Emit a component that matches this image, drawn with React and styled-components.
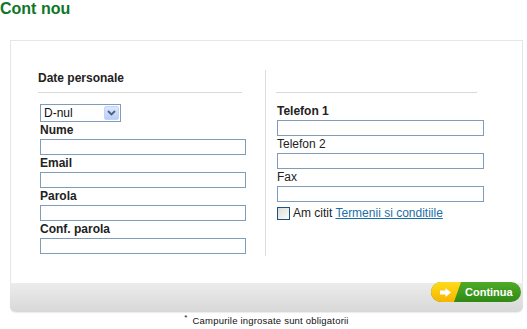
import React from 'react';
import styled, { createGlobalStyle } from 'styled-components';

const GlobalStyle = createGlobalStyle`
  body {
    margin: 0;
    background: #fff;
    font-family: 'Liberation Sans', Arial, sans-serif;
    color: #222;
  }
`;

const Page = styled.div`
  width: 527px;
`;

const Title = styled.h1`
  margin: 0;
  font-size: 16px;
  line-height: 18px;
  font-weight: 700;
  color: #0f7628;
`;

const Card = styled.div`
  margin: 22px 0 0 10px;
  width: 513px;
  box-sizing: border-box;
  border: 1px solid #e6e6e6;
  border-bottom: none;
  border-radius: 0 0 6px 6px;
  background: #fff;
`;

const Body = styled.div`
  display: flex;
  align-items: flex-start;
  height: 242px;
  box-sizing: border-box;
  padding: 29px 0 0 27px;
`;

const Column = styled.div`
  width: ${({ $width }) => $width}px;
  margin-left: ${({ $offset }) => $offset || 0}px;
`;

const Heading = styled.div`
  width: ${({ $width }) => $width}px;
  height: 14px;
  padding: 1px 0 7px;
  border-bottom: 1px solid #d9d9d9;
  font-size: 12px;
  line-height: 14px;
  font-weight: 700;
  color: #222;
`;

const Fields = styled.div`
  display: flex;
  flex-direction: column;
  align-items: flex-start;
  margin-top: ${({ $top }) => $top}px;
  padding-left: ${({ $inset }) => $inset}px;
`;

const Label = styled.label`
  display: block;
  font-size: 12px;
  line-height: 14px;
  padding: 1px 0 2px;
  font-weight: ${({ $required }) => ($required ? 700 : 400)};
  color: #222;
`;

const Input = styled.input`
  display: block;
  box-sizing: border-box;
  width: ${({ $width }) => $width}px;
  height: 16px;
  margin: 0;
  padding: 0 2px;
  border: 1px solid #7f9db9;
  background: #fff;
  font: 12px 'Liberation Sans', Arial, sans-serif;
  outline: none;
`;

const Select = styled.div`
  display: flex;
  align-items: center;
  justify-content: space-between;
  box-sizing: border-box;
  width: 81px;
  height: 18px;
  padding: 0 1px 0 3px;
  border: 1px solid #7f9db9;
  background: #fff;
  font-size: 12px;
  color: #111;
`;

const SelectButton = styled.span`
  display: flex;
  align-items: center;
  justify-content: center;
  width: 15px;
  height: 14px;
  border-radius: 2px;
  background: linear-gradient(#dce8fb, #b9cff5);
  border: 1px solid #c3d3fd;
  box-sizing: border-box;
`;

const Divider = styled.div`
  width: 1px;
  height: 186px;
  margin-left: 23px;
  background: #dcdcdc;
`;

const CheckRow = styled.div`
  display: flex;
  align-items: center;
  gap: 3px;
  margin-top: 4px;
  font-size: 12px;
  line-height: 14px;
  color: #222;
`;

const Checkbox = styled.span`
  display: block;
  width: 13px;
  height: 13px;
  box-sizing: border-box;
  border: 1px solid #1c5180;
  background: linear-gradient(135deg, #dcdcd7, #fbfbfa);
`;

const Link = styled.a`
  color: #1b6fa6;
  text-decoration: underline;
`;

const Footer = styled.div`
  display: flex;
  justify-content: flex-end;
  align-items: flex-start;
  height: 29px;
  margin: 0 -1px;
  padding-right: 2px;
  border-radius: 0 0 6px 6px;
  background: linear-gradient(#ececec, #d8d8d8);
  box-shadow: 0 1px 1px rgba(0, 0, 0, 0.08);
`;

const Button = styled.button`
  position: relative;
  display: flex;
  align-items: center;
  width: 90px;
  height: 20px;
  margin-top: -1px;
  padding: 0 0 0 34px;
  border: none;
  border-radius: 10px;
  overflow: hidden;
  background: linear-gradient(#4fab27, #2f8914);
  color: #fff;
  font: 700 11px 'Liberation Sans', Arial, sans-serif;
  cursor: pointer;
`;

const ButtonArrow = styled.span`
  position: absolute;
  left: 0;
  top: 0;
  bottom: 0;
  width: 30px;
  display: flex;
  align-items: center;
  padding-left: 9px;
  box-sizing: border-box;
  background: linear-gradient(#ffdc1a, #f7b400);
  clip-path: polygon(0 0, 100% 0, calc(100% - 7px) 100%, 0 100%);
`;

const Note = styled.div`
  width: 513px;
  margin-left: 10px;
  padding-top: 3px;
  text-align: center;
  font-size: 9.5px;
  line-height: 12px;
  color: #111;
  letter-spacing: 0.2px;

  sup {
    font-size: 8px;
    line-height: 0;
    margin-right: 2px;
  }
`;

const leftFields = ['Nume', 'Email', 'Parola', 'Conf. parola'];
const rightFields = [
  { label: 'Telefon 1', required: true },
  { label: 'Telefon 2' },
  { label: 'Fax' },
];

const App = () => (
  <Page>
    <GlobalStyle />
    <Title>Cont nou</Title>
    <Card>
      <Body>
        <Column $width={204}>
          <Heading $width={204}>Date personale</Heading>
          <Fields $top={11} $inset={2}>
            <Select>
              <span>D-nul</span>
              <SelectButton>
                <svg width="9" height="6" viewBox="0 0 9 6">
                  <path d="M1 1 L4.5 4.5 L8 1" fill="none" stroke="#4d6185" strokeWidth="1.8" />
                </svg>
              </SelectButton>
            </Select>
            {leftFields.map((f) => (
              <React.Fragment key={f}>
                <Label $required>{f}</Label>
                <Input $width={206} type={f.includes('arola') ? 'password' : 'text'} />
              </React.Fragment>
            ))}
          </Fields>
        </Column>
        <Divider />
        <Column $width={207} $offset={10}>
          <Heading $width={201} />
          <Fields $top={10} $inset={1}>
            {rightFields.map((f) => (
              <React.Fragment key={f.label}>
                <Label $required={f.required}>{f.label}</Label>
                <Input $width={207} />
              </React.Fragment>
            ))}
            <CheckRow>
              <Checkbox />
              <span>
                Am citit <Link href="#">Termenii si conditiile</Link>
              </span>
            </CheckRow>
          </Fields>
        </Column>
      </Body>
      <Footer>
        <Button>
          <ButtonArrow>
            <svg width="11" height="9" viewBox="0 0 11 9">
              <path d="M0 2.5 H5.5 V0 L11 4.5 L5.5 9 V6.5 H0 Z" fill="#fff" />
            </svg>
          </ButtonArrow>
          Continua
        </Button>
      </Footer>
    </Card>
    <Note>
      <sup>*</sup> Campurile ingrosate sunt obligatorii
    </Note>
  </Page>
);

export default App;
